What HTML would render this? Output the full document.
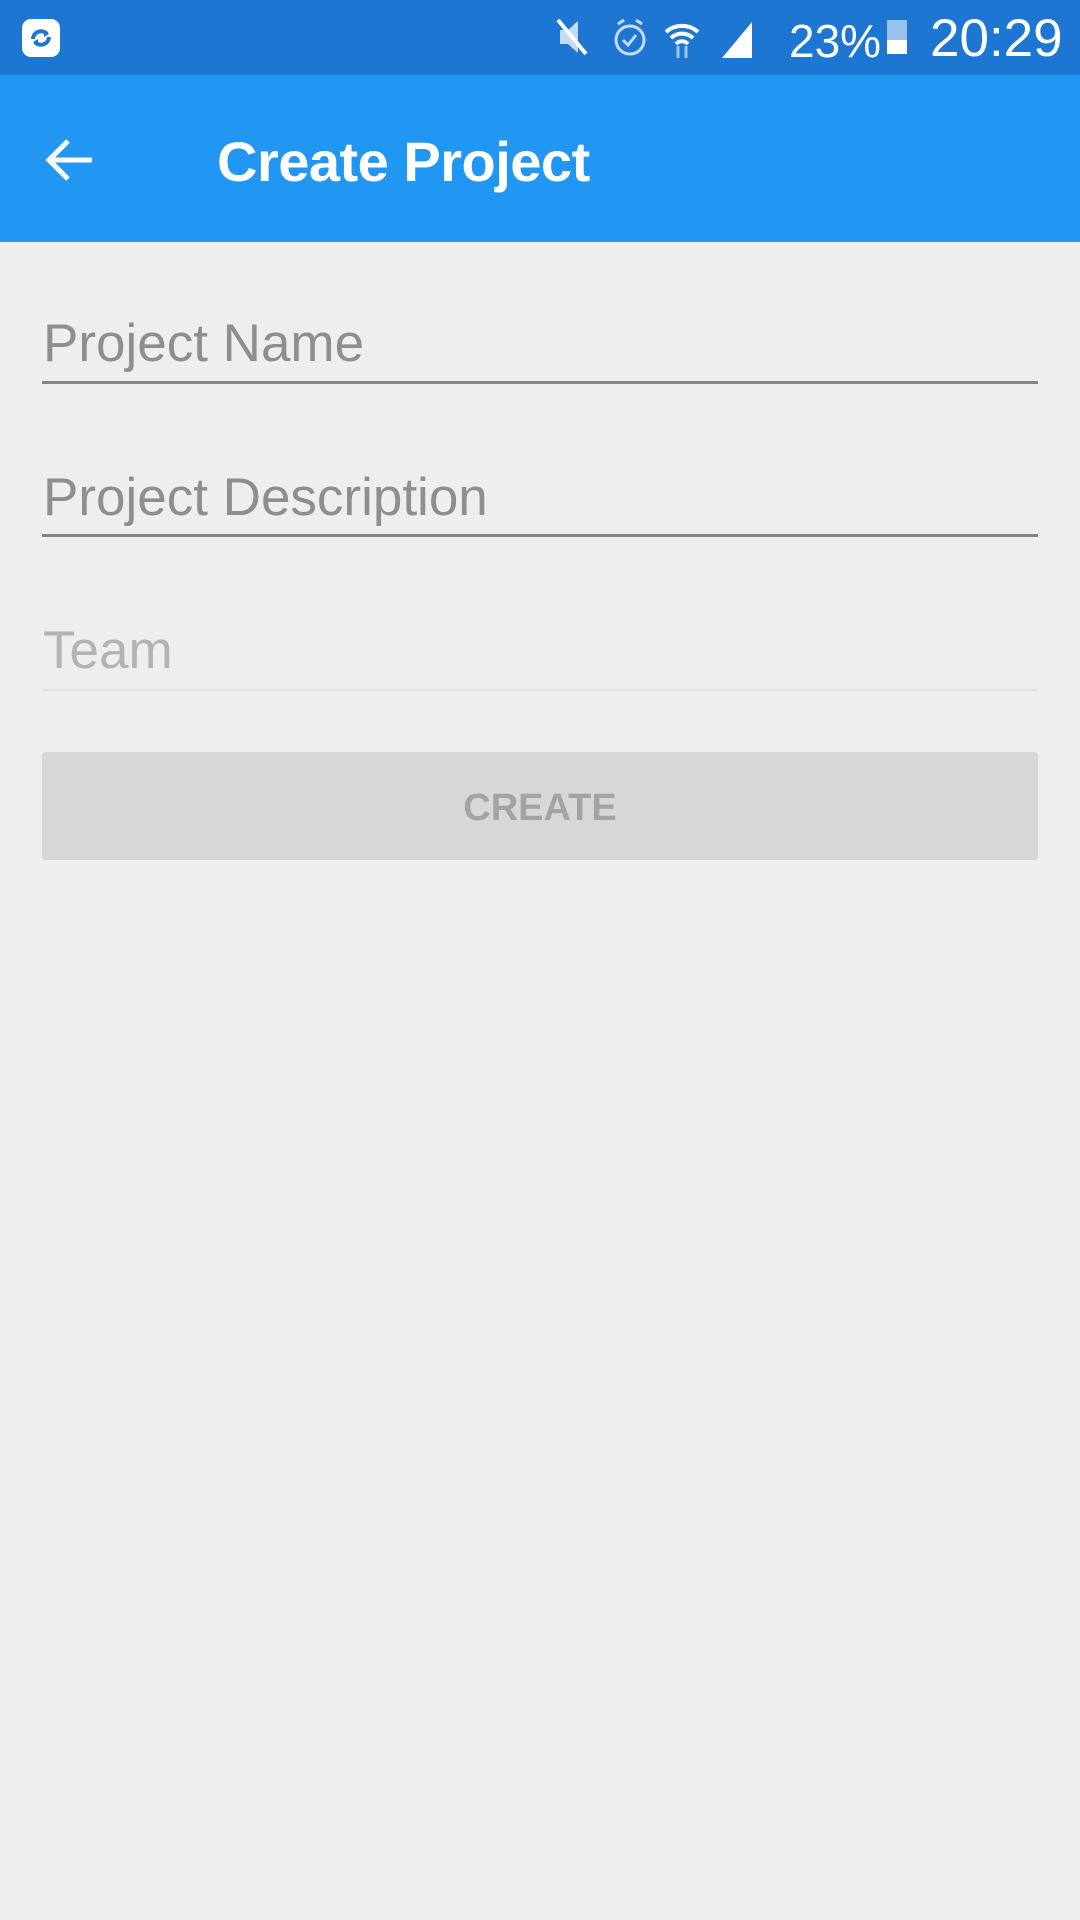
<!DOCTYPE html>
<html><head><meta charset="utf-8"><style>
body{margin:0;width:1080px;height:1920px;background:#eeeeee;font-family:"Liberation Sans",sans-serif;position:relative;overflow:hidden}
.abs{position:absolute}
.status{left:0;top:0;width:1080px;height:75px;background:#1c76d2}
.bar{left:0;top:75px;width:1080px;height:167px;background:#2196f3}
.lbl{left:43px;color:#8e8e8e;font-size:53px;white-space:nowrap}
.line{left:42px;width:996px;height:3px;background:#858585}
</style></head><body>
<div class="abs status"></div>
<div class="abs" style="left:22px;top:19px;width:38px;height:38px;background:#fff;border-radius:9px"></div>
<svg class="abs" style="left:22px;top:19px" width="38" height="38" viewBox="0 0 38 38"><path d="M11 20a8 8 0 0 1 14-5 M27 18a8 8 0 0 1-14 5" stroke="#1c76d2" stroke-width="4" fill="none"/><path d="M22 11l5 4-5 3z M16 27l-5-4 5-3z" fill="#1c76d2"/></svg>
<svg class="abs" style="left:556px;top:16px" width="210" height="46" viewBox="0 0 210 46">
<path d="M4 14h8l10-9v32l-10-9H4z" fill="#c6dbf5"/><path d="M2 4l28 34" stroke="#fff" stroke-width="4"/>
<circle cx="74" cy="24" r="14" fill="none" stroke="#c6dbf5" stroke-width="3"/><path d="M67 24l5 5 8-10" stroke="#c6dbf5" stroke-width="3" fill="none"/><path d="M62 8l6-4M86 8l-6-4" stroke="#c6dbf5" stroke-width="3"/>
<path d="M110 16a24 24 0 0 1 32 0M115 22a16 16 0 0 1 22 0M120 28a8 8 0 0 1 12 0" stroke="#fff" stroke-width="4" fill="none"/><path d="M122 30v12M130 30v12" stroke="#a0c4ee" stroke-width="3"/>
<path d="M166 42l30-36v36z" fill="#fff"/>
</svg>
<div class="abs" style="left:789px;top:14px;color:#fff;font-size:46px">23%</div>
<div class="abs" style="left:887px;top:20px;width:20px;height:34px;background:#fff;opacity:.55"></div>
<div class="abs" style="left:887px;top:40px;width:20px;height:14px;background:#fff"></div>
<div class="abs" style="left:930px;top:8px;color:#fff;font-size:53px">20:29</div>
<div class="abs bar"></div>
<svg class="abs" style="left:44px;top:136px" width="52" height="48" viewBox="0 0 52 48"><path d="M48 24H6M24 5L5 24l19 19" stroke="#fff" stroke-width="5" fill="none"/></svg>
<div class="abs" style="left:217px;top:129px;color:#fff;font-size:56px;font-weight:bold;letter-spacing:-0.5px">Create Project</div>
<div class="abs lbl" style="top:313px">Project Name</div>
<div class="abs line" style="top:381px"></div>
<div class="abs lbl" style="top:467px">Project Description</div>
<div class="abs line" style="top:534px"></div>
<div class="abs lbl" style="top:620px;color:#b3b3b3">Team</div>
<div class="abs line" style="top:689px;height:2px;background:#e2e2e2"></div>
<div class="abs" style="left:42px;top:752px;width:996px;height:108px;background:#d7d7d7;border-radius:4px;color:#a3a3a3;font-size:38px;font-weight:bold;text-align:center;line-height:112px">CREATE</div>
</body></html>
